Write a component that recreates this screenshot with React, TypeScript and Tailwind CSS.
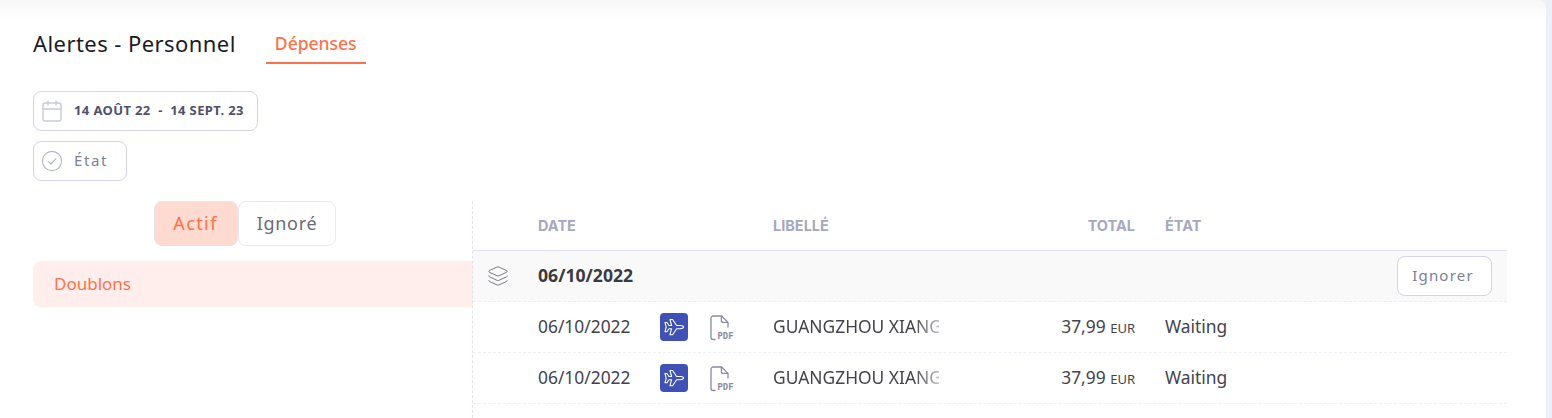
import React from "react";
import { Calendar, Layers } from "lucide-react";

const sans = "font-['Noto_Sans','Open_Sans',sans-serif]";

function PlaneIcon() {
  return (
    <svg width="24" height="24" viewBox="0 0 24 24" fill="none" stroke="#ffffff" strokeWidth="1.1" strokeLinejoin="round">
      <path d="M3 7.5h2l2 3h2.6L8 4.5h2.6l4 6h3.6c1.7 0 3.3.7 3.3 1.6s-1.6 1.6-3.3 1.6h-3.6l-4 6H8l1.6-6H7l-2 3H3l1.2-4.6z" />
    </svg>
  );
}

function CheckCircleIcon() {
  return (
    <svg width="24" height="24" viewBox="0 0 24 24" fill="none" stroke="#b4b6ce" strokeWidth="1.1" strokeLinecap="round" strokeLinejoin="round">
      <circle cx="12" cy="12" r="9.6" />
      <path d="M8.2 12.4l2.7 2.6 4.9-5.2" />
    </svg>
  );
}

function PdfIcon() {
  return (
    <svg width="26" height="30" viewBox="0 0 26 30" fill="none">
      <path d="M5.5 24.5H3.2A2.2 2.2 0 0 1 1 22.3V3.2A2.2 2.2 0 0 1 3.2 1h8.4l6.4 6.4v5" stroke="#8a8ba3" strokeWidth="1.3" />
      <path d="M11.4 1v4.4c0 1.2.8 2 2 2H18" stroke="#8a8ba3" strokeWidth="1.3" />
      <text x="7.5" y="24" fontSize="10.5" fontWeight="700" fill="#8a8ba3" fontFamily="Liberation Mono, monospace" textLength="16" lengthAdjust="spacingAndGlyphs">PDF</text>
    </svg>
  );
}

function Row() {
  return (
    <div className="flex items-center h-[51px] border-b border-dashed border-[#eeeef7] text-[17.4px] text-[#43434d]">
      <div className="w-[65px]" />
      <div className="w-[122px] pb-[2px]">06/10/2022</div>
      <div className="w-[28px] h-[28px] rounded bg-[#3f51b5] flex items-center justify-center mt-[-1px]">
        <PlaneIcon />
      </div>
      <div className="ml-[22px] w-[63px] mt-[6px]">
        <PdfIcon />
      </div>
      <div className="w-[166px] pb-[2px] whitespace-nowrap [mask-image:linear-gradient(to_right,black_140px,rgba(0,0,0,0.35)_166px)]">GUANGZHOU XIANG</div>
      <div className="w-[196px] pb-[2px] text-right">
        37,99 <span className="text-[13px]">EUR</span>
      </div>
      <div className="ml-[30px] pb-[2px]">Waiting</div>
    </div>
  );
}

export default function App() {
  return (
    <div className={`w-[1552px] h-[418px] overflow-hidden bg-[#eef0f8] ${sans}`}>
      <div className="w-[1546px] h-[418px] rounded-tr-lg bg-gradient-to-b from-[#f7f7f7] to-white to-[20px] pl-[33px] pr-[39px] pt-[25px]">
        <div className="flex items-start h-[39px]">
          <h1 className="text-[22px] leading-[36px] tracking-[0.43px] text-[#1b1b28] font-normal">Alertes - Personnel</h1>
          <div className="ml-[30px] w-[100px] h-[39px] border-b-2 border-[#ff7149] text-center text-[17.5px] leading-[36px] font-medium text-[#ff7149]">
            Dépenses
          </div>
        </div>

        <div className="mt-[27px] flex items-center w-[225px] h-[40px] rounded-lg border border-[#d3d3ec] pl-[6px]">
          <Calendar size={24} strokeWidth={1.4} className="text-[#c8cae0]" />
          <span className="ml-[10px] text-[13px] font-bold tracking-[0.38px] text-[#50516a] whitespace-pre">14 AOÛT 22  -  14 SEPT. 23</span>
        </div>
        <div className="mt-[10px] flex items-center w-[94px] h-[40px] rounded-lg border border-[#d3d3ec] pl-[6px]">
          <CheckCircleIcon />
          <span className="ml-[10px] pb-[1px] text-[15px] tracking-[1.6px] text-[#7e8099]">État</span>
        </div>

        <div className="mt-[20px] flex">
          <div className="w-[440px]">
            <div className="flex justify-center pr-[17px] h-[45px]">
              <div className="w-[84px] rounded-lg border border-[#e4e4ea] bg-[#ffdad0] flex items-center justify-center text-[18px] tracking-[1.4px] text-[#ff7149]">
                Actif
              </div>
              <div className="w-[98px] rounded-lg border border-[#e8e8ee] flex items-center justify-center pl-[1px] text-[18px] tracking-[0.7px] text-[#6b6b75]">
                Ignoré
              </div>
            </div>
            <div className="mt-[15px] h-[46px] rounded-l-lg bg-[#ffeeeb] pl-[21px] flex items-center text-[17px] text-[#ff7149]">
              Doublons
            </div>
          </div>

          <div className="flex-1 h-[217px] -ml-px border-l border-dashed border-[#e3e3f0]">
            <div className="flex items-center h-[50px] border-b border-[#e0e0ee] font-['Inter',sans-serif] text-[14.5px] font-bold text-[#a6a8c0]">
              <div className="w-[65px]" />
              <div className="w-[235px]">DATE</div>
              <div className="w-[166px]">LIBELLÉ</div>
              <div className="w-[196px] text-right">TOTAL</div>
              <div className="ml-[30px]">ÉTAT</div>
            </div>
            <div className="flex items-center h-[51px] bg-[#f9f9f9] border-b border-dashed border-[#eeeef7]">
              <div className="w-[65px] pl-[14px]">
                <Layers size={22} strokeWidth={1} className="text-[#6f6f78]" />
              </div>
              <div className="pb-[2px] text-[17.6px] font-bold text-[#3a3a44]">06/10/2022</div>
              <div className="ml-auto mr-[15px] w-[95px] h-[40px] rounded-lg border border-[#d3d3ec] bg-white flex items-center justify-center pr-[3px] pb-[1px] text-[15px] tracking-[1.2px] text-[#7e8099]">
                Ignorer
              </div>
            </div>
            <Row />
            <Row />
          </div>
        </div>
      </div>
    </div>
  );
}
